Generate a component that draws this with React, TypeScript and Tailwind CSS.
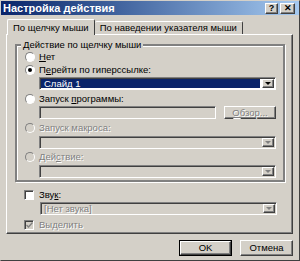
import React from "react"

const raised =
  "border border-t-white border-l-white border-r-[#404040] border-b-[#404040] shadow-[inset_-1px_-1px_0_#808080]"
const sunken =
  "border border-t-[#808080] border-l-[#808080] border-r-white border-b-white shadow-[inset_1px_1px_0_#404040]"
const greyText = "text-[#808080] [text-shadow:1px_1px_0_#ffffff]"

function Radio({ checked, disabled }: { checked?: boolean; disabled?: boolean }) {
  return (
    <span
      className={`flex h-[10px] w-[10px] shrink-0 items-center justify-center rounded-full border border-t-[#808080] border-l-[#808080] border-r-white border-b-white ${
        disabled ? "bg-[#d4d0c8]" : "bg-white"
      }`}
    >
      {checked && <span className="h-[4px] w-[4px] rounded-full bg-black" />}
    </span>
  )
}

function Check({ checked, disabled }: { checked?: boolean; disabled?: boolean }) {
  return (
    <span
      className={`flex h-[10px] w-[10px] shrink-0 items-center justify-center ${sunken} ${
        disabled ? "bg-[#d4d0c8]" : "bg-white"
      }`}
    >
      {checked && (
        <svg width="7" height="6" viewBox="0 0 7 6">
          <path d="M0.5 3 L2.5 5 L6.5 0.5" stroke={disabled ? "#808080" : "#000"} strokeWidth="1.3" fill="none" />
        </svg>
      )}
    </span>
  )
}

function Arrow({ disabled }: { disabled?: boolean }) {
  return (
    <span className={`flex h-full w-[12px] shrink-0 items-center justify-center bg-[#d4d0c8] ${raised}`}>
      <svg width="6" height="3" viewBox="0 0 6 3">
        <polygon points="0,0 6,0 3,3" fill={disabled ? "#808080" : "#000"} />
      </svg>
    </span>
  )
}

function Select({ text, selected, disabled }: { text?: string; selected?: boolean; disabled?: boolean }) {
  return (
    <div className={`flex h-[13px] shrink-0 items-stretch ${sunken} ${disabled ? "bg-[#d4d0c8]" : "bg-white"}`}>
      <div className="flex min-w-0 flex-1 items-center p-[1px]">
        {selected ? (
          <div className="flex h-full flex-1 items-center bg-[#0a246a] pl-[3px] text-white">{text}</div>
        ) : (
          <span className={`pl-[2px] ${disabled ? greyText : ""}`}>{text}</span>
        )}
      </div>
      <div className="p-[1px]">
        <Arrow disabled={disabled} />
      </div>
    </div>
  )
}

function Option({
  label,
  checked,
  disabled,
}: {
  label: React.ReactNode
  checked?: boolean
  disabled?: boolean
}) {
  return (
    <div className="flex h-[12px] shrink-0 items-center gap-[4px]">
      <Radio checked={checked} disabled={disabled} />
      <span className={disabled ? greyText : ""}>{label}</span>
    </div>
  )
}

export default function App() {
  return (
    <div className="flex h-[261px] w-[300px] flex-col overflow-hidden border border-t-[#d4d0c8] border-l-[#d4d0c8] border-r-[#404040] border-b-[#404040] bg-[#d4d0c8] font-['Liberation_Sans',sans-serif] text-[9.5px] leading-none text-black">
      {/* title bar */}
      <div className="flex h-[14px] shrink-0 items-center justify-between bg-gradient-to-r from-[#0a246a] to-[#a6caf0] pl-[2px] pr-[4px]">
        <span className="text-[11px] font-bold text-white">Настройка действия</span>
        <div className="flex gap-[2px]">
          <span className={`flex h-[11px] w-[13px] items-center justify-center bg-[#d4d0c8] text-[9px] font-bold ${raised}`}>?</span>
          <span className={`flex h-[11px] w-[15px] items-center justify-center bg-[#d4d0c8] text-[9px] font-bold ${raised}`}>✕</span>
        </div>
      </div>

      {/* tabs */}
      <div className="mt-[4px] flex h-[15px] shrink-0 items-end pl-[6px]">
        <div className="relative z-10 -mb-[1px] flex h-[16px] items-center rounded-t-[2px] border border-b-0 border-t-white border-l-white border-r-[#404040] bg-[#d4d0c8] px-[5px]">
          По щелчку мыши
        </div>
        <div className="flex h-[13px] items-center rounded-t-[2px] border border-b-0 border-t-white border-l-0 border-r-[#404040] px-[5px]">
          По наведении указателя мыши
        </div>
      </div>

      {/* tab panel */}
      <div className="ml-[5px] flex h-[200px] w-[287px] shrink-0 flex-col border border-t-white border-l-white border-r-[#404040] border-b-[#404040] pt-[9px] pl-[8px] pr-[7px] shadow-[inset_-1px_-1px_0_#808080]">
        <div className="relative flex h-[138px] shrink-0 flex-col border-2 border-[#808080] pt-[5px] pr-[7px] pl-[8px] shadow-[inset_1px_1px_0_#ffffff,1px_1px_0_#ffffff]">
          <span className="absolute -top-[6px] left-[4px] bg-[#d4d0c8] px-[2px]">Действие по щелчку мыши</span>
          <Option label={<><u>Н</u>ет</>} />
          <div className="mt-[1px]">
            <Option label={<>П<u>е</u>рейти по гиперссылке:</>} checked />
          </div>
          <div className="mt-[1px] ml-[14px]">
            <Select text="Слайд 1" selected />
          </div>
          <div className="mt-[3px]">
            <Option label={<>Запуск <u>п</u>рограммы:</>} />
          </div>
          <div className="mt-[1px] ml-[14px] flex h-[13px] shrink-0 gap-[8px]">
            <div className={`flex-1 bg-[#d4d0c8] ${sunken}`} />
            <div className={`flex w-[52px] items-center justify-center bg-[#d4d0c8] ${greyText} ${raised}`}>
              <span><u>О</u>бзор...</span>
            </div>
          </div>
          <div className="mt-[3px]">
            <Option label="Запуск макроса:" disabled />
          </div>
          <div className="mt-[2px] ml-[14px]">
            <Select disabled />
          </div>
          <div className="mt-[2px]">
            <Option label={<>Дей<u>с</u>твие:</>} disabled />
          </div>
          <div className="mt-[2px] ml-[14px]">
            <Select disabled />
          </div>
        </div>

        <div className="mt-[7px] ml-[9px] flex h-[12px] shrink-0 items-center gap-[5px]">
          <Check />
          <span>Зву<u>к</u>:</span>
        </div>
        <div className="mt-[1px] ml-[25px] mr-[8px]">
          <Select text="[Нет звука]" disabled />
        </div>
        <div className="mt-[4px] ml-[9px] flex h-[12px] shrink-0 items-center gap-[5px]">
          <Check checked disabled />
          <span className={greyText}>Выделить</span>
        </div>
      </div>

      {/* buttons */}
      <div className="mt-[6px] flex justify-end gap-[8px] pr-[6px]">
        <div className="flex h-[16px] w-[53px] items-center justify-center border border-black bg-[#d4d0c8]">
          <div className={`flex h-full w-full items-center justify-center ${raised}`}>OK</div>
        </div>
        <div className={`flex h-[16px] w-[53px] items-center justify-center bg-[#d4d0c8] ${raised}`}>Отмена</div>
      </div>
    </div>
  )
}
